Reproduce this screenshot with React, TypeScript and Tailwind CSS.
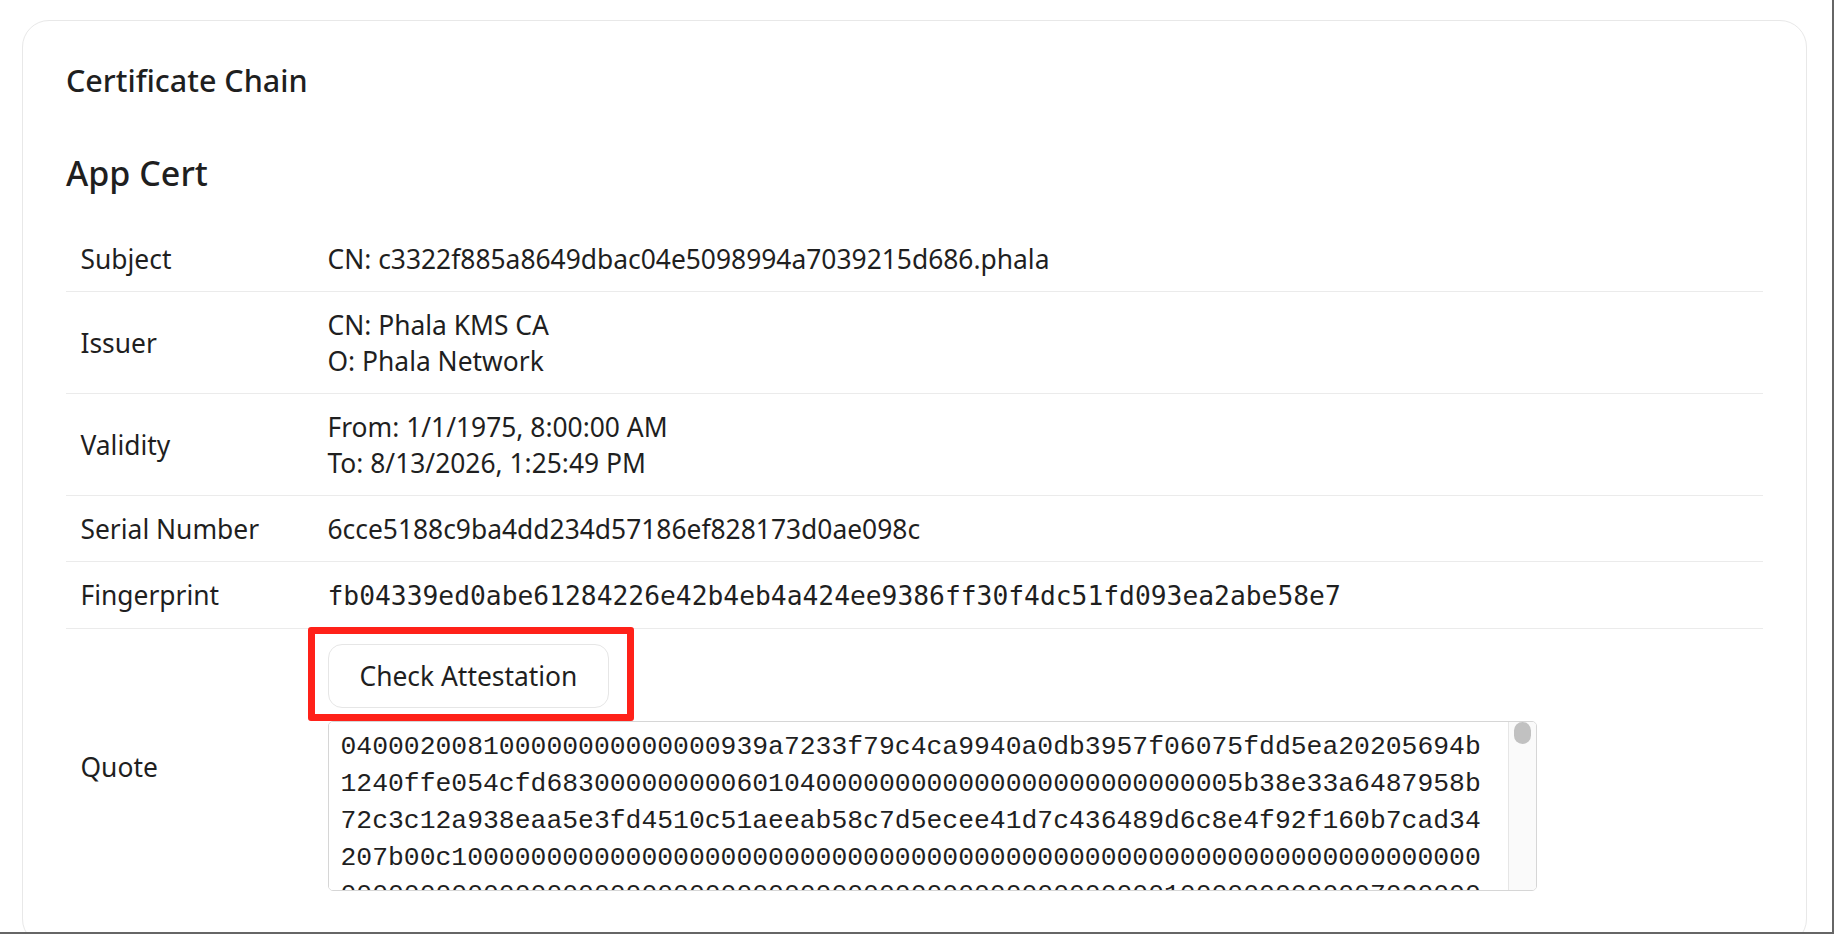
import React from "react";

const L1 = "0400" + "0200" + "81000000" + "00000000" + "939a7233f79c4ca9940a0db3957f0607" + "5fdd5ea20205694b";
const L2 = "1240ffe054cfd683" + "00000000" + "06010400000000000000000000000000" + "5b38e33a6487958b";
const L3 = "72c3c12a938eaa5e3fd4510c51aeeab58c7d5ecee41d7c436489d6c8e4f92f160b7cad34";
const L4 = "207b00c1" + "0".repeat(64);
const L5 = "0".repeat(52) + "1" + "0".repeat(11) + "07020000";

function tail(): string {
  let s = 987654321;
  let out = "";
  for (let i = 0; i < 29 * 72; i++) {
    s = (s * 1103515245 + 12345) & 0x7fffffff;
    out += "0123456789abcdef"[(s >> 16) & 15];
  }
  return out;
}

const QUOTE = L1 + L2 + L3 + L4 + L5 + tail();

function Row({ label, children, last }: { label: string; children: React.ReactNode; last?: boolean }) {
  return (
    <div className={`flex items-center py-[14.5px] ${last ? "" : "border-b border-[#ebebeb]"}`}>
      <div className="w-[247.5px] shrink-0 pl-[14.5px]">{label}</div>
      <div className="pl-[14px] min-w-0 flex-1">{children}</div>
    </div>
  );
}

export default function App() {
  return (
    <div className="w-[1834px] h-[934px] overflow-hidden bg-white border-r-2 border-b-2 border-[#666666] font-['Noto_Sans',sans-serif] text-[#1f1f1f]">
      <div className="pt-[20px] pl-[22px] pr-[25px]">
        <div className="rounded-[27px] border border-[#e8e8e8] px-[43px] pt-[43px] pb-[40px]">
          <h2 className="text-[30.5px] leading-[32px] font-medium">Certificate Chain</h2>
          <h3 className="mt-[57px] text-[34px] leading-[40px] font-medium">App Cert</h3>
          <div className="mt-[33px] text-[26.4px] leading-[36px]">
            <Row label="Subject">CN: c3322f885a8649dbac04e5098994a7039215d686.phala</Row>
            <Row label="Issuer">
              <div>CN: Phala KMS CA</div>
              <div>O: Phala Network</div>
            </Row>
            <Row label="Validity">
              <div>From: 1/1/1975, 8:00:00 AM</div>
              <div>To: 8/13/2026, 1:25:49 PM</div>
            </Row>
            <Row label="Serial Number">6cce5188c9ba4dd234d57186ef828173d0ae098c</Row>
            <Row label="Fingerprint">
              <span className="font-['DejaVu_Sans_Mono',monospace] text-[26.3px]">
                fb04339ed0abe61284226e42b4eb4a424ee9386ff30f4dc51fd093ea2abe58e7
              </span>
            </Row>
            <Row label="Quote" last>
              <div className="flex flex-col items-start">
                <div className="relative">
                  <button className="rounded-[14px] border border-[#e6e6e6] bg-white px-[31px] py-[13px] text-[26.4px] leading-[36px] text-[#1f1f1f] font-['Noto_Sans',sans-serif]">
                    Check Attestation
                  </button>
                  <div className="absolute left-[-19.5px] top-[-16.5px] w-[326px] h-[94px] rounded-[3px] border-[7px] border-[#ff2119] pointer-events-none" />
                </div>
                <div className="mt-[13px] flex w-[1209px] h-[170px] overflow-hidden rounded-[5px] border border-[#d6d6d6] bg-white">
                  <textarea
                    readOnly
                    value={QUOTE}
                    className="flex-1 h-full resize-none overflow-hidden bg-white pl-[12px] pr-[17px] pt-[7px] font-['Liberation_Mono',monospace] text-[26.4px] leading-[37px] text-[#1f1f1f] break-all outline-none"
                  />
                  <div className="w-[28px] shrink-0 h-full border-l border-[#e6e6e6] bg-[#fafafa] pl-[5px]">
                    <div className="w-[17px] h-[22px] rounded-full bg-[#c1c1c1]" />
                  </div>
                </div>
              </div>
            </Row>
          </div>
        </div>
      </div>
    </div>
  );
}
